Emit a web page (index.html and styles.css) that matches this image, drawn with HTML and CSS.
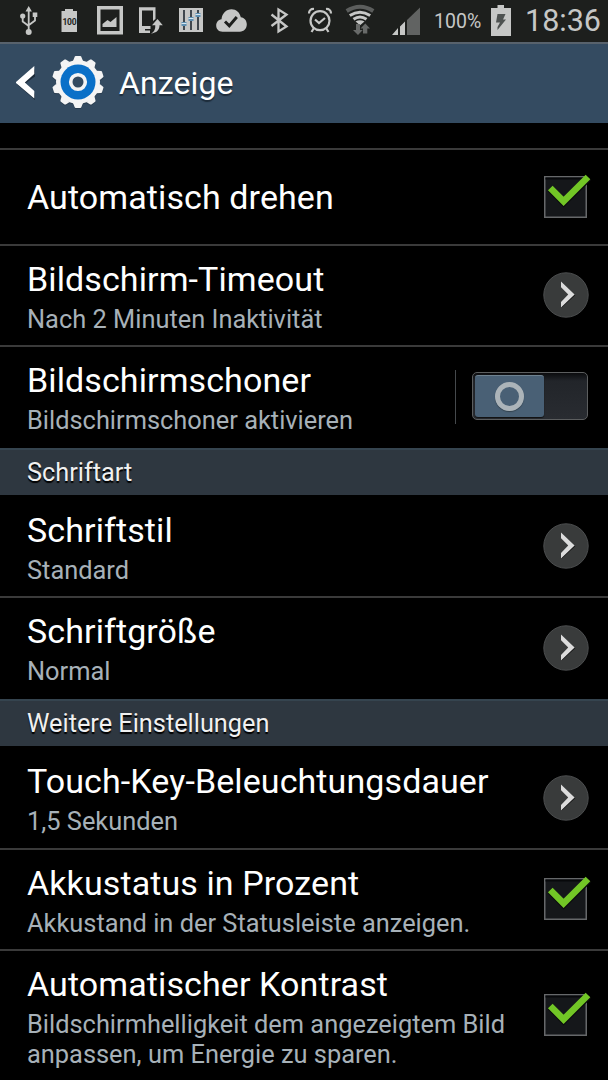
FILE: index.html
```html
<!DOCTYPE html>
<html lang="de">
<head>
    <meta charset="UTF-8">
    <meta name="viewport" content="width=device-width, initial-scale=1.0">
    <title>Anzeige</title>
    <link rel="stylesheet" href="styles.css">
</head>
<body>
    <svg class="symbols" width="0" height="0">
        <symbol id="check" viewBox="0 0 51 48">
            <rect x="4.75" y="6.75" width="41.5" height="40.5" fill="#15171a" stroke="#66686a" stroke-width="1.5"/>
            <path d="M5.5 8.5h40" stroke="#07080a" stroke-width="2"/>
            <path d="M10.3 19l13.3 13.500L48.5 8" fill="none" stroke="#0a0b0c" stroke-width="7"/>
            <path d="M10.3 18L23.6 31.300L48 7" fill="none" stroke="#72c626" stroke-width="6.6"/>
        </symbol>
        <symbol id="arrow" viewBox="0 0 46 46">
            <circle cx="23" cy="23" r="22.2" fill="#393b3b" stroke="#4c4e4f" stroke-width="1"/>
            <path d="M18.3 11.2v4.3L26 23.2l-7.7 8.4v4.4L32.2 23.2z" fill="#151515"/>
            <path d="M18 9.6v5.6l7.2 7.4-7.2 7.4v5.6l13.6-13z" fill="#dcdcdc"/>
        </symbol>
    </svg>

    <div class="statusbar">
        <svg width="430" height="42" viewBox="0 0 430 42">
            <!-- usb -->
            <g fill="none" stroke="#c6c7c6" stroke-width="1.8">
                <path d="M28.7 10v20M22.7 17v4.5l6 4.5M35 16v4.5l-6 4.5"/>
                <path d="M28.7 6l-3.2 5.5h6.4zM32.7 12.500h4.600v4.600h-4.600z" fill="#c6c7c6" stroke="none"/>
                <circle cx="22.7" cy="16" r="2.6" fill="#c6c7c6" stroke="none"/>
                <circle cx="28.7" cy="32" r="3" fill="#c6c7c6" stroke="none"/>
            </g>
            <!-- battery level -->
            <path d="M65 9h8v2h4v21H61.5V11H65z" fill="#c6c7c6"/>
            <text x="69.4" y="24.8" class="tiny">100</text>
            <!-- picture -->
            <path d="M97 6h26v28.5H97zM100.5 9.5V31h19V9.5z" fill="#c6c7c6" fill-rule="evenodd"/>
            <path d="M102.500 27v-3l5-4 3 2 6-5v10z" fill="#c6c7c6"/>
            <!-- device update -->
            <path d="M139 7.2h16.5V19L153 21V10.500h-11V26h8.5v3H145v1.500h5V33h-11z" fill="#c6c7c6"/>
            <path d="M157.500 19l5.300 6.200h-3.300c0 5-3 7.500-8.500 8.300 3.200-1.700 4.500-4 4.300-8.300H152z" fill="#c6c7c6"/>
            <!-- equalizer -->
            <path d="M179 8h24v24h-24z" fill="#c6c7c6"/>
            <path d="M184 10v20M191 10v20M198 10v20" stroke="#29323a" stroke-width="1.7"/>
            <path d="M181.500 22h5v4h-5zM188.500 17h5v4h-5zM195.500 13h5v4h-5z" fill="#5e90b2"/>
            <path d="M181.500 23.500h5M188.500 18.500h5M195.500 14.500h5" stroke="#d6e6ef" stroke-width="1"/>
            <!-- cloud -->
            <path d="M222.500 31.700c-4 0-6.300-2.800-6.300-6.200 0-3.300 2.200-6 5.300-6.300.7-6 4.800-9.900 10-9.900 4.700 0 8.200 3 9.300 8 3.600.4 6 3.500 6 7 0 4.300-2.800 7.400-7 7.400z" fill="#c6c7c6"/>
            <path d="M225 21.500l4.300 4.300 7.500-8.800" fill="none" stroke="#1d1f1d" stroke-width="2.9"/>
            <!-- bluetooth -->
            <path d="M271.500 14.500l15 12-8 5V9.500l8 5-15 11.500" fill="none" stroke="#c6c7c6" stroke-width="2.3"/>
            <!-- alarm -->
            <g fill="none" stroke="#c6c7c6" stroke-width="2.2">
                <circle cx="320" cy="20.700" r="9.500"/>
                <path d="M315 19.500l4 3.500 6-5M309 13.500c0-3 2-4.800 5-4.500M331 13.500c0-3-2-4.800-5-4.500M314 28l-2.500 4M326 28l2.500 4"/>
            </g>
            <!-- wifi -->
            <g fill="none" stroke-width="3">
                <path d="M346.700 11q13.400-8.500 26.600 0" stroke="#5c5e5d" stroke-width="4"/>
                <path d="M349.800 15.500q10.200-6.500 20.400 0M353.500 19.300q6.500-4.500 13 0" stroke="#c6c7c6"/>
                <path d="M355.500 21.500q4.500-2.500 9 0l-4.500 3.800z" fill="#c6c7c6"/>
            </g>
            <path d="M356 24h4v6h2.800L358 35l-5-5h3zM363 33.500v-5h-2.500l4.800-5 4.700 5h-2.700v5z" fill="#686a69"/>
            <!-- signal -->
            <path d="M392 35h6v-7zM400 35h5V21.500l-5 5z" fill="#c6c7c6"/>
            <path d="M407 35h13V7.500L407 20z" fill="#616362"/>
        </svg>
        <span class="percent">100%</span>
        <svg class="charge" width="20" height="31" viewBox="0 0 20 31">
            <path d="M6.500 0h6.500v3h7v28H0V3h6.500z" fill="#c6c7c6"/>
            <path d="M6.500 9h8l-2.500 5.500h3L6.500 25v-3l2.500-4.500H5z" fill="#4e5251"/>
        </svg>
        <span class="clock">18:36</span>
    </div>

    <div class="header">
        <svg class="back" width="20" height="34" viewBox="0 0 20 34">
            <path d="M19 3v7.500L8.500 18 19 28v6L1 18.500z" fill="#1d2c3b"/>
            <path d="M18.300 0v8L8.800 16.500 18.300 25v7.500L-.5 16.500z" fill="#fff"/>
        </svg>
        <svg class="gear" width="54" height="54" viewBox="-27 -27 54 54">
            <defs>
                <path id="tooth" d="M-5-21l1.700-4.300q.3-.7 1-.7h4.600q.7 0 1 .7L5-21z"/>
                <g id="wheel">
                    <circle r="22"/>
                    <use href="#tooth"/>
                    <use href="#tooth" transform="rotate(36)"/>
                    <use href="#tooth" transform="rotate(72)"/>
                    <use href="#tooth" transform="rotate(108)"/>
                    <use href="#tooth" transform="rotate(144)"/>
                    <use href="#tooth" transform="rotate(180)"/>
                    <use href="#tooth" transform="rotate(216)"/>
                    <use href="#tooth" transform="rotate(252)"/>
                    <use href="#tooth" transform="rotate(288)"/>
                    <use href="#tooth" transform="rotate(324)"/>
                </g>
            </defs>
            <use href="#wheel" y="1" fill="#283b4d"/>
            <use href="#wheel" fill="#f4f4f4"/>
            <circle r="17.500" fill="#0a70c8"/>
            <circle r="7.300" fill="#344b61" stroke="#f4f4f4" stroke-width="3.600"/>
        </svg>
        <h1>Anzeige</h1>
    </div>

    <div class="list">
        <div class="row single">
            <div class="text"><h2>Automatisch drehen</h2></div>
            <svg class="check"><use href="#check"/></svg>
        </div>
        <div class="row short">
            <div class="text">
                <h2>Bildschirm-Timeout</h2>
                <p>Nach 2 Minuten Inaktivität</p>
            </div>
            <svg class="arrow"><use href="#arrow"/></svg>
        </div>
        <div class="row">
            <div class="text">
                <h2>Bildschirmschoner</h2>
                <p>Bildschirmschoner aktivieren</p>
            </div>
            <span class="divider"></span>
            <div class="switch"><div class="thumb"><span class="ring"></span></div></div>
        </div>
        <div class="section">Schriftart</div>
        <div class="row short first">
            <div class="text">
                <h2>Schriftstil</h2>
                <p>Standard</p>
            </div>
            <svg class="arrow"><use href="#arrow"/></svg>
        </div>
        <div class="row">
            <div class="text">
                <h2>Schriftgröße</h2>
                <p>Normal</p>
            </div>
            <svg class="arrow"><use href="#arrow"/></svg>
        </div>
        <div class="section">Weitere Einstellungen</div>
        <div class="row mid first">
            <div class="text">
                <h2>Touch-Key-Beleuchtungsdauer</h2>
                <p>1,5 Sekunden</p>
            </div>
            <svg class="arrow"><use href="#arrow"/></svg>
        </div>
        <div class="row short">
            <div class="text">
                <h2>Akkustatus in Prozent</h2>
                <p>Akkustand in der Statusleiste anzeigen.</p>
            </div>
            <svg class="check"><use href="#check"/></svg>
        </div>
        <div class="row last">
            <div class="text">
                <h2>Automatischer Kontrast</h2>
                <p>Bildschirmhelligkeit dem angezeigtem Bild<br>anpassen, um Energie zu sparen.</p>
            </div>
            <svg class="check"><use href="#check"/></svg>
        </div>
    </div>
</body>
</html>
```
FILE: styles.css
```css
* {
    box-sizing: border-box;
}

body {
    margin: 0;
    height: 1080px;
    overflow: hidden;
    background-color: #000;
    color: #fff;
    font-family: Roboto, sans-serif;
}

h1, h2, p {
    margin: 0;
    font-weight: 400;
    white-space: nowrap;
}

.symbols {
    display: block;
}

.statusbar {
    display: flex;
    align-items: center;
    height: 42px;
    background-color: #1d1f1d;
    color: #c6c7c6;
}

.tiny {
    font-size: 8.5px;
    font-weight: 700;
    letter-spacing: -0.2px;
    fill: #1d1f1d;
    text-anchor: middle;
}

.percent {
    width: 61px;
    padding-left: 4px;
    font-size: 19.5px;
    white-space: nowrap;
}

.charge {
    margin-top: -1px;
}

.clock {
    margin-left: 14px;
    font-size: 30.5px;
    line-height: 42px;
}

.header {
    display: flex;
    align-items: center;
    height: 81px;
    padding: 0 0 3px 16px;
    background-color: #344b61;
    border-top: 2px solid #58626c;
}

.back {
    margin-top: 1px;
}

.gear {
    margin-left: 15px;
}

h1 {
    margin: 2px 0 0 14px;
    font-size: 32px;
    line-height: 40px;
    letter-spacing: 0.1px;
    text-shadow: 0 2px 1px #1d2c3b;
}

.list {
    margin-top: 25px;
}

.row {
    display: flex;
    align-items: center;
    height: 103px;
    padding: 0 20px 0 27px;
    border-top: 2px solid #3a3a3a;
}

.row.short {
    height: 101px;
}

.row.mid {
    height: 102px;
}

.row.single {
    height: 96px;
}

.row.first {
    border-top-color: transparent;
}

.row.last {
    height: 131px;
}

.text {
    flex: 1;
    align-self: flex-start;
    padding-top: 13px;
}

.single .text {
    align-self: center;
    padding-top: 0;
}

h2 {
    font-size: 34px;
    line-height: 40px;
    letter-spacing: 0.1px;
}

p {
    margin-top: 6px;
    color: #a7b1b8;
    font-size: 25.4px;
    line-height: 29.5px;
}

.section {
    height: 47px;
    padding-left: 27px;
    background-color: #2e3740;
    border-top: 2px solid #35444f;
    font-size: 25.3px;
    line-height: 46px;
    color: #f0f0f0;
    text-shadow: 0 2px 1px #000;
}

.check {
    width: 51px;
    height: 48px;
    margin: -7px -3px 0 0;
}

.arrow {
    width: 46px;
    height: 46px;
    margin: -1px -1px 0 0;
}

.divider {
    width: 1px;
    height: 54px;
    margin: -2px 16px 0 0;
    background-color: #45494c;
}

.switch {
    width: 116px;
    height: 48px;
    margin-top: -4px;
    padding: 2px;
    border: 1.5px solid #5c5e5f;
    border-radius: 5px;
    background: linear-gradient(#0b0c0e, #22252a 8px, #292c31);
}

.thumb {
    display: flex;
    align-items: center;
    justify-content: center;
    width: 69px;
    height: 42px;
    border-top: 1px solid #6e8290;
    border-radius: 3px;
    background-color: #496075;
    box-shadow: 0 1px 1px #111;
}

.ring {
    width: 29px;
    height: 29px;
    border: 5px solid #acb4b9;
    border-radius: 50%;
    box-shadow: 0 1px 1px #33424e;
}
```
